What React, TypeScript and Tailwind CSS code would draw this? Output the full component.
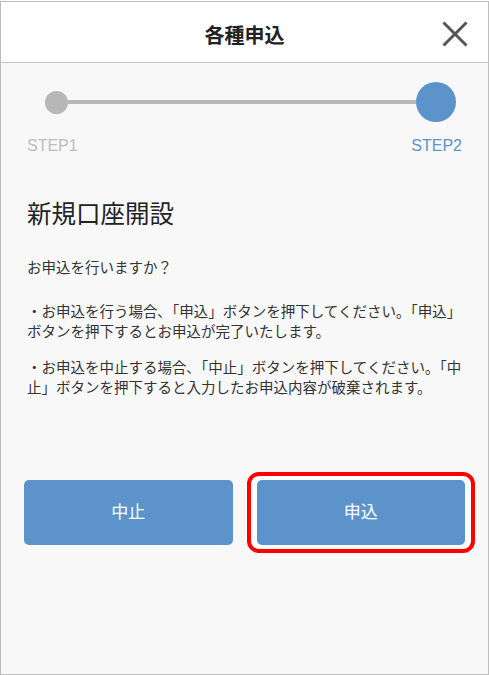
import React from 'react';

const jp = { fontFamily: '"Liberation Sans", "Noto Sans CJK JP", sans-serif' };

const CloseIcon: React.FC = () => (
  <svg width="26" height="26" viewBox="0 0 26 26" fill="none">
    <path d="M1.5 1.5 L24.5 24.5 M24.5 1.5 L1.5 24.5" stroke="#555" strokeWidth="3" />
  </svg>
);

const App: React.FC = () => {
  return (
    <div className="w-[489px] h-[675px] bg-white pt-px" style={jp}>
      <div className="h-[674px] border border-[#bdbdbd] bg-[#f8f8f8] flex flex-col">
        {/* header */}
        <div className="relative h-[61px] bg-white border-b border-[#c4c4c4] flex items-center justify-center pt-[7px]">
          <h1 className="text-[20px] font-bold text-[#222] leading-none">各種申込</h1>
          <button className="absolute right-[20px] top-[19px]">
            <CloseIcon />
          </button>
        </div>

        <div className="px-[26px] pt-[19px] flex flex-col">
          {/* step bar */}
          <div className="ml-[18px] mr-[6px] flex items-center h-[40px]">
            <div className="w-[23px] h-[23px] rounded-full bg-[#b7b7b7] shrink-0" />
            <div className="flex-1 h-[4px] bg-[#b7b7b7]" />
            <div className="w-[40px] h-[40px] rounded-full bg-[#5c93cb] shrink-0" />
          </div>
          <div className="mt-[14px] flex justify-between text-[16px] leading-[20px]">
            <span className="text-[#bdbdbd]">STEP1</span>
            <span className="text-[#5c93cb]">STEP2</span>
          </div>

          <h2 className="mt-[43px] text-[24.5px] leading-[32px] text-[#222]">新規口座開設</h2>

          <div className="text-[14.5px] leading-[20px] text-[#333] whitespace-nowrap">
            <p className="mt-[27px]">お申込を行いますか？</p>
            <p className="mt-[24px]">
              ・お申込を行う場合､「申込」ボタンを押下してください｡「申込」
              <br />
              ボタンを押下するとお申込が完了いたします。
            </p>
            <p className="mt-[16px]">
              ・お申込を中止する場合､「中止」ボタンを押下してください｡「中
              <br />
              止」ボタンを押下すると入力したお申込内容が破棄されます。
            </p>
          </div>
        </div>

        {/* buttons */}
        <div className="mt-[82px] pl-[23px] pr-[23px] flex gap-[24px]">
          <button className="flex-1 h-[65px] rounded-[5px] bg-[#5c93ca] text-white text-[17px]">中止</button>
          <div className="relative flex-1">
            <div className="absolute -left-[10px] -right-[10px] -top-[8px] -bottom-[8px] rounded-[12px] border-[4px] border-[#ff0000] bg-white" />
            <button className="relative w-full h-[65px] rounded-[5px] bg-[#5c93ca] text-white text-[17px]">申込</button>
          </div>
        </div>
      </div>
    </div>
  );
};

export default App;
